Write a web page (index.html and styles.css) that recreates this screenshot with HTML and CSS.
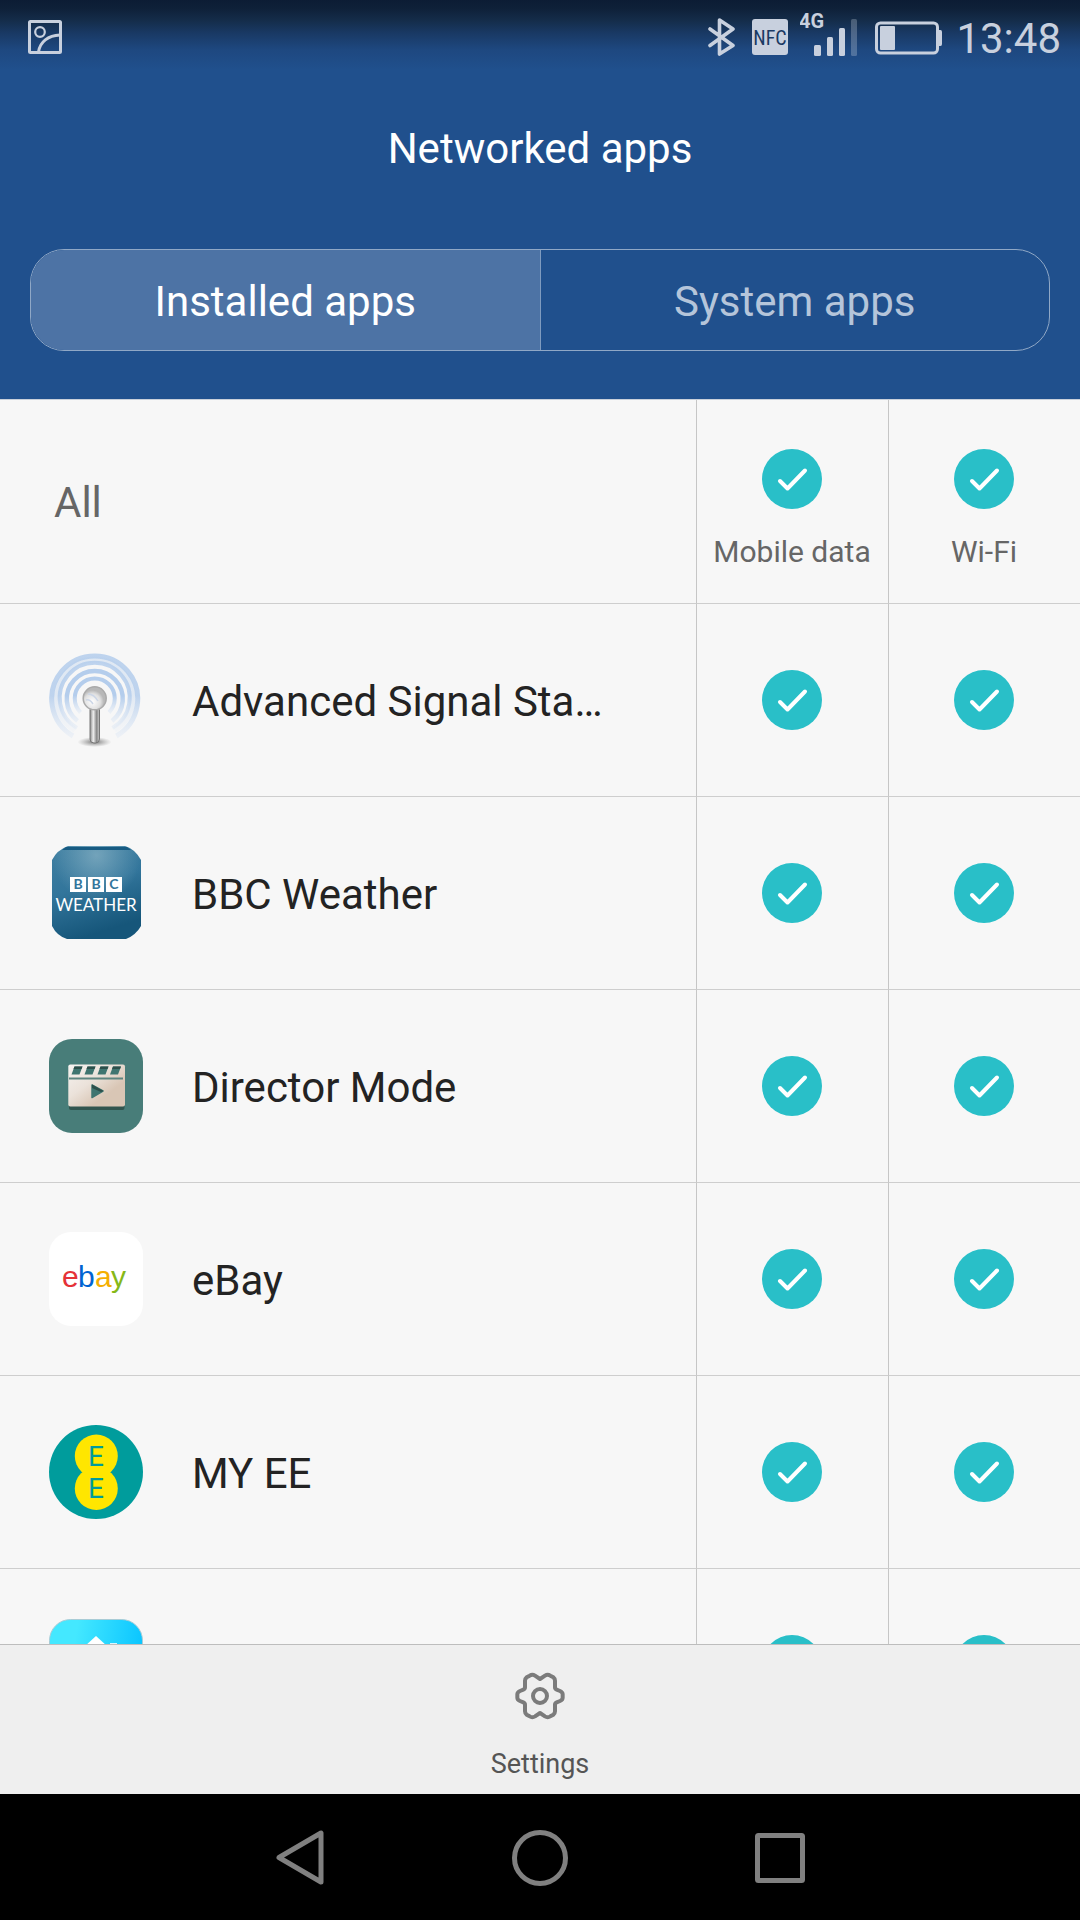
FILE: index.html
```html
<!DOCTYPE html>
<html lang="en">
<head>
<meta charset="utf-8">
<meta name="viewport" content="width=device-width, initial-scale=1">
<title>Networked apps</title>
<link rel="stylesheet" href="styles.css">
</head>
<body>
<svg class="sprite" aria-hidden="true">
  <symbol id="tick" viewBox="0 0 60 60">
    <circle cx="30" cy="30" r="30" fill="#29bfc8"/>
    <path d="M18 32l7.5 7.5L43 21.500" fill="none" stroke="#fff" stroke-width="4" stroke-linecap="round" stroke-linejoin="round"/>
  </symbol>
</svg>

<header class="header">
  <div class="status">
    <svg class="status-photo" width="34" height="34" viewBox="0 0 34 34" fill="none" stroke="currentColor">
      <rect x="1.500" y="1.500" width="31" height="31" rx="1" stroke-width="3"/>
      <circle cx="12" cy="12" r="4.800" stroke-width="2.200"/>
      <path d="M10.500 32C12 22 20 15.500 32 15" stroke-width="3"/>
    </svg>
    <div class="status-icons">
      <svg width="36" height="38" viewBox="0 0 36 38" fill="none" stroke="currentColor" stroke-width="3.600" stroke-linejoin="round" stroke-linecap="round">
        <path d="M6 11L29 27.500L15.500 36V2L29 11L6 27.500"/>
      </svg>
      <svg width="36" height="36" viewBox="0 0 36 36">
        <rect width="36" height="36" rx="3" fill="currentColor"/>
        <text class="nfc" x="18" y="26" text-anchor="middle">NFC</text>
      </svg>
      <svg width="60" height="54" viewBox="0 0 60 54" fill="currentColor">
        <text class="network" x="-1" y="18">4G</text>
        <rect x="14" y="35" width="7" height="11" rx="1.500"/>
        <rect x="27" y="27" width="6" height="19" rx="1.500"/>
        <rect x="39" y="18" width="6" height="28" rx="1.500"/>
        <rect x="51" y="9" width="6" height="37" rx="1.500" opacity=".3"/>
      </svg>
      <svg width="72" height="36" viewBox="0 -1 72 36" fill="currentColor">
        <rect x="4.500" y="3" width="61" height="30" rx="4" fill="none" stroke="currentColor" stroke-width="3"/>
        <rect x="8" y="6" width="15" height="24" rx="1"/>
        <path d="M66 10h2.500q1.500 0 1.500 2v12q0 2-1.500 2H66z"/>
      </svg>
      <span class="clock">13:48</span>
    </div>
  </div>
  <h1 class="title">Networked apps</h1>
  <div class="tabs" role="tablist">
    <button class="tab tab-active" type="button" role="tab" aria-selected="true">Installed apps</button>
    <button class="tab" type="button" role="tab" aria-selected="false">System apps</button>
  </div>
</header>

<main class="list">
  <table class="apps">
    <thead>
      <tr class="all-row">
        <th class="all" scope="col">All</th>
        <th class="cell" scope="col"><label class="toggle"><span class="check"><input type="checkbox" checked><svg><use href="#tick"/></svg></span>Mobile data</label></th>
        <th class="cell" scope="col"><label class="toggle"><span class="check"><input type="checkbox" checked><svg><use href="#tick"/></svg></span>Wi-Fi</label></th>
      </tr>
    </thead>
    <tbody>
      <tr>
        <td><div class="app">
          <svg class="icon" viewBox="0 0 94 94">
            <defs>
              <linearGradient id="wave" x1="0" y1="0" x2="0" y2="1"><stop offset=".5" stop-color="#b4cdec"/><stop offset="1" stop-color="#d3e1f3" stop-opacity=".35"/></linearGradient>
              <linearGradient id="pole"><stop offset="0" stop-color="#888"/><stop offset=".35" stop-color="#eee"/><stop offset=".7" stop-color="#888"/><stop offset="1" stop-color="#ccc"/></linearGradient>
              <radialGradient id="ball" cx=".4" cy=".65"><stop offset="0" stop-color="#fff"/><stop offset=".7" stop-color="#e0e0e0"/><stop offset="1" stop-color="#b8b8b8"/></radialGradient>
              <radialGradient id="shade"><stop offset="0" stop-color="#777"/><stop offset="1" stop-color="#999" stop-opacity="0"/></radialGradient>
            </defs>
            <g fill="none" stroke="url(#wave)">
              <path d="M24 83A43 43 0 1 1 67.400 83" stroke-width="5" opacity=".85"/>
              <path d="M26 77A38 38 0 1 1 65.400 77" stroke-width="6" opacity=".35"/>
              <path d="M28 75A35 35 0 1 1 63.400 75" stroke-width="4" opacity=".85"/>
              <path d="M28.500 68A28 28 0 1 1 63 68" stroke-width="4.500"/>
              <path d="M31.500 59.500A20 20 0 1 1 60 59.500" stroke-width="4"/>
            </g>
            <ellipse cx="45.500" cy="89" rx="17" ry="5" fill="url(#shade)"/>
            <rect x="41" y="53" width="9.500" height="37" rx="4" fill="url(#pole)" stroke="#777" stroke-width="1"/>
            <circle cx="45.700" cy="45.300" r="11.500" fill="url(#ball)" stroke="#aaa" stroke-width="1.500"/>
            <path d="M37 47q4-1 7 4M39 41q6 0 10 7" fill="none" stroke="#ccd6e6" stroke-width="1.500"/>
          </svg>
          <span class="name">Advanced Signal Sta…</span></div></td>
        <td class="cell"><label class="toggle"><span class="check"><input type="checkbox" aria-label="Mobile data" checked><svg><use href="#tick"/></svg></span></label></td>
        <td class="cell"><label class="toggle"><span class="check"><input type="checkbox" aria-label="Wi-Fi" checked><svg><use href="#tick"/></svg></span></label></td>
      </tr>
      <tr>
        <td><div class="app">
          <svg class="icon" viewBox="0 0 94 94">
            <defs>
              <linearGradient id="sky" x1="0" y1="0" x2=".3" y2="1"><stop offset="0" stop-color="#4080a2"/><stop offset=".5" stop-color="#32759b"/><stop offset="1" stop-color="#16567a"/></linearGradient>
              <radialGradient id="glow" cx=".5" cy=".1" r=".5"><stop offset="0" stop-color="#8bb4c6" stop-opacity=".7"/><stop offset="1" stop-color="#8bb4c6" stop-opacity="0"/></radialGradient>
            </defs>
            <path id="tile" d="M19 0H76Q86 3 92 14V80Q87 89 77 93H18Q8 90 3 80V14Q8 4 19 0Z" fill="url(#sky)"/>
            <path d="M19 0H76Q86 3 92 14V80Q87 89 77 93H18Q8 90 3 80V14Q8 4 19 0Z" fill="url(#glow)"/>
            <path d="M17 1H78L82 4H13Z" fill="#175b82"/>
            <g fill="#fff"><rect x="21" y="31" width="16" height="15"/><rect x="39" y="31" width="16" height="15"/><rect x="57" y="31" width="16" height="15"/></g>
            <g class="bbc"><text x="29" y="43">B</text><text x="47" y="43">B</text><text x="65" y="43">C</text></g>
            <text class="weather" x="47" y="65">WEATHER</text>
          </svg>
          <span class="name">BBC Weather</span></div></td>
        <td class="cell"><label class="toggle"><span class="check"><input type="checkbox" aria-label="Mobile data" checked><svg><use href="#tick"/></svg></span></label></td>
        <td class="cell"><label class="toggle"><span class="check"><input type="checkbox" aria-label="Wi-Fi" checked><svg><use href="#tick"/></svg></span></label></td>
      </tr>
      <tr>
        <td><div class="app">
          <svg class="icon" viewBox="0 0 94 94">
            <defs><linearGradient id="board" x1="0" y1="0" x2="1" y2="1"><stop offset="0" stop-color="#f6f3f0"/><stop offset=".4" stop-color="#ebe2da"/><stop offset=".7" stop-color="#d9c6b5"/></linearGradient></defs>
            <rect width="94" height="94" rx="23" fill="#487d79"/>
            <rect x="20" y="32" width="55.500" height="39" rx="2" fill="#31554f"/>
            <rect x="19.300" y="25.500" width="56.700" height="42" rx="2" fill="url(#board)"/>
            <path d="M20 38.500h54v2H20z" fill="#5e8580"/>
            <g fill="#3f7570">
              <path d="M25.500 27.500h8l-3 8h-8zM38.500 27.500h8l-3 8h-8zM51.500 27.500h8l-3 8h-8zM64 27.500h8l-3 8h-8z"/>
            </g>
            <g fill="#2c4f4a"><path d="M25.500 27.500h8l-1 2.500h-8zM38.500 27.500h8l-1 2.500h-8zM51.500 27.500h8l-1 2.500h-8zM64 27.500h8l-1 2.500h-8z"/></g>
            <path d="M43 46L54 52L43 58.500Z" fill="#3f7570" stroke="#3f7570" stroke-width="1.500" stroke-linejoin="round"/>
            <path d="M43 45.500L54.500 52L52 53L43 49Z" fill="#2c4f4a"/>
          </svg>
          <span class="name">Director Mode</span></div></td>
        <td class="cell"><label class="toggle"><span class="check"><input type="checkbox" aria-label="Mobile data" checked><svg><use href="#tick"/></svg></span></label></td>
        <td class="cell"><label class="toggle"><span class="check"><input type="checkbox" aria-label="Wi-Fi" checked><svg><use href="#tick"/></svg></span></label></td>
      </tr>
      <tr>
        <td><div class="app">
          <svg class="icon" viewBox="0 0 94 94">
            <rect width="94" height="94" rx="22" fill="#fff"/>
            <g class="ebay">
              <text x="13" y="55" fill="#e53238">e</text>
              <text x="29" y="55" fill="#0064d2">b</text>
              <text x="46" y="55" fill="#f5af02">a</text>
              <text x="62" y="55" fill="#86b817">y</text>
            </g>
          </svg>
          <span class="name">eBay</span></div></td>
        <td class="cell"><label class="toggle"><span class="check"><input type="checkbox" aria-label="Mobile data" checked><svg><use href="#tick"/></svg></span></label></td>
        <td class="cell"><label class="toggle"><span class="check"><input type="checkbox" aria-label="Wi-Fi" checked><svg><use href="#tick"/></svg></span></label></td>
      </tr>
      <tr>
        <td><div class="app">
          <svg class="icon" viewBox="0 0 94 94">
            <circle cx="47" cy="47" r="47" fill="#009c9c"/>
            <g fill="#ffe600"><circle cx="47.300" cy="31" r="21.500"/><circle cx="47.300" cy="63.500" r="21.500"/></g>
            <g class="ee"><text x="47" y="41">E</text><text x="47" y="73">E</text></g>
          </svg>
          <span class="name">MY EE</span></div></td>
        <td class="cell"><label class="toggle"><span class="check"><input type="checkbox" aria-label="Mobile data" checked><svg><use href="#tick"/></svg></span></label></td>
        <td class="cell"><label class="toggle"><span class="check"><input type="checkbox" aria-label="Wi-Fi" checked><svg><use href="#tick"/></svg></span></label></td>
      </tr>
      <tr>
        <td><div class="app">
          <svg class="icon" viewBox="0 0 94 94">
            <defs><linearGradient id="aqua" x1="0" y1="0" x2="1" y2=".15"><stop offset=".3" stop-color="#44e8ff"/><stop offset="1" stop-color="#0cc6ff"/></linearGradient></defs>
            <rect x=".5" y="1.500" width="93" height="92" rx="21" fill="url(#aqua)" stroke="#a9ccd6"/>
            <path d="M47 18L70 39V70H24V39Z" fill="#fff"/>
            <path d="M61 25h7v10h-7z" fill="#d8f7ff"/>
          </svg></div></td>
        <td class="cell"><label class="toggle"><span class="check"><input type="checkbox" aria-label="Mobile data" checked><svg><use href="#tick"/></svg></span></label></td>
        <td class="cell"><label class="toggle"><span class="check"><input type="checkbox" aria-label="Wi-Fi" checked><svg><use href="#tick"/></svg></span></label></td>
      </tr>
    </tbody>
  </table>
</main>

<footer class="toolbar">
  <button class="settings" type="button">
    <svg width="50" height="48" viewBox="166 126 150 144" fill="none" stroke="#7b7b7b" stroke-width="12" stroke-linejoin="round">
      <path d="M241 147L256 137Q264 132 272 137L281 142Q286 146 286 152V172Q286 177 291 179L301 183Q309 187 309 193V203Q309 209 301 213L291 217Q286 219 286 224V244Q286 250 281 254L272 259Q264 264 256 259L241 249L226 259Q218 264 210 259L201 254Q196 250 196 244V224Q196 219 191 217L181 213Q173 209 173 203V193Q173 187 181 183L191 179Q196 177 196 172V152Q196 146 201 142L210 137Q218 132 226 137Z"/>
      <circle cx="241" cy="198" r="21"/>
    </svg>
    Settings
  </button>
</footer>

<nav class="navbar">
  <button class="nav-button" type="button" aria-label="Back">
    <svg width="60" height="60" viewBox="0 0 60 60"><path d="M9 30.500L51 6V55Z"/></svg>
  </button>
  <button class="nav-button" type="button" aria-label="Home">
    <svg width="60" height="60" viewBox="0 0 60 60"><circle cx="30" cy="31" r="25.500"/></svg>
  </button>
  <button class="nav-button" type="button" aria-label="Recent">
    <svg width="60" height="60" viewBox="0 0 60 60"><rect x="7.500" y="8.500" width="45" height="45" rx="1"/></svg>
  </button>
</nav>
</body>
</html>
```
FILE: styles.css
```css
* {
  box-sizing: border-box;
}

body {
  margin: 0;
  height: 100vh;
  display: flex;
  flex-direction: column;
  overflow: hidden;
  background: #f7f7f7;
  color: #232323;
  font-family: Roboto, sans-serif;
  font-size: 42px;
}

button {
  border: 0;
  padding: 0;
  background: none;
  color: inherit;
  font: inherit;
}

.sprite {
  position: absolute;
  width: 0;
  height: 0;
}

/* Header */
.header {
  flex: none;
  padding-bottom: 48px;
  background: #20508d linear-gradient(#0c1c34 0, #0e2038 8px, #142c49 20px, #193964 33px, #1e4880 50px, #20508d 70px);
  color: #fff;
}

.status {
  display: flex;
  justify-content: space-between;
  align-items: center;
  height: 74px;
  padding: 0 19px 0 28px;
  color: #c8d0de;
}

.status-icons {
  display: flex;
  align-items: center;
  gap: 12px;
}

.clock {
  padding-top: 4px;
  line-height: 70px;
}

.nfc {
  font-family: "Liberation Sans Narrow", "Roboto Condensed", "Open Sans Condensed", Roboto, sans-serif;
  font-size: 20px;
  font-weight: 400;
  fill: #1a3963;
}

.network {
  font-size: 20px;
  font-weight: 700;
}

.title {
  margin: 2px 0 0;
  font-size: 42px;
  font-weight: 400;
  line-height: 146px;
  text-align: center;
}

.tabs {
  display: flex;
  height: 102px;
  margin: 27px 30px 0;
  border: 1px solid #90a8c6;
  border-radius: 34px;
  overflow: hidden;
}

.tab {
  flex: 1;
  padding-top: 2px;
  color: #b5c5da;
}

.tab-active {
  border-right: 1px solid #7f9bbf;
  background: #4d73a5;
  color: #fff;
}

/* App list */
.list {
  flex: 1;
  min-height: 0;
  overflow: hidden;
  border-top: 1px solid #c9d0da;
}

.apps {
  width: 100%;
  border-spacing: 0;
  table-layout: fixed;
}

.apps tr {
  height: 193px;
}

.apps .all-row {
  height: 204px;
}

.apps th,
.apps td {
  padding: 0;
  border-bottom: 1px solid #cecece;
}

.apps .all {
  padding: 2px 0 0 54px;
  color: #666;
  font-weight: 400;
  text-align: left;
}

.apps .cell {
  width: 192px;
  padding-right: 1px;
  border-left: 1px solid #c6c6c6;
}

.app {
  display: flex;
  align-items: center;
  gap: 49px;
  padding-left: 49px;
  white-space: nowrap;
}

.name {
  padding-top: 2px;
}

.icon {
  flex: none;
  width: 94px;
  height: 94px;
}

.toggle {
  display: flex;
  flex-direction: column;
  align-items: center;
  gap: 25px;
  color: #666;
  font-size: 30px;
  font-weight: 400;
  line-height: 36px;
}

.all-row .toggle {
  padding-top: 15px;
}

.check {
  display: grid;
  width: 60px;
  height: 60px;
}

.check input,
.check svg {
  grid-area: 1 / 1;
  width: 60px;
  height: 60px;
  margin: 0;
}

.check input {
  appearance: none;
  border: 2px solid #b0b0b0;
  border-radius: 50%;
}

.check svg {
  visibility: hidden;
}

.check input:checked {
  border-color: transparent;
}

.check input:checked + svg {
  visibility: visible;
}

/* App icon lettering */
.bbc {
  fill: #32759b;
  font-family: Lato, sans-serif;
  font-size: 14px;
  font-weight: 700;
  text-anchor: middle;
}

.weather {
  fill: #fff;
  font-family: Lato, sans-serif;
  font-size: 17px;
  text-anchor: middle;
}

.ebay {
  font-family: "Liberation Sans", sans-serif;
  font-size: 30px;
  stroke-width: 1px;
}

.ee {
  fill: #009c9c;
  font-size: 28px;
  font-weight: 400;
  text-anchor: middle;
}

/* Bottom toolbar */
.toolbar {
  display: flex;
  justify-content: center;
  flex: none;
  height: 150px;
  border-top: 1px solid #bdbdbd;
  background: #efefef;
}

.settings {
  display: flex;
  flex-direction: column;
  align-items: center;
  gap: 26px;
  padding: 27px 40px 0;
  color: #555;
  font-size: 27px;
  line-height: 36px;
}

/* System navigation */
.navbar {
  display: flex;
  justify-content: center;
  flex: none;
  height: 126px;
  background: #000;
}

.nav-button {
  display: flex;
  align-items: center;
  justify-content: center;
  width: 240px;
}

.nav-button svg {
  fill: none;
  stroke: #808080;
  stroke-width: 5;
  stroke-linejoin: round;
}
```
